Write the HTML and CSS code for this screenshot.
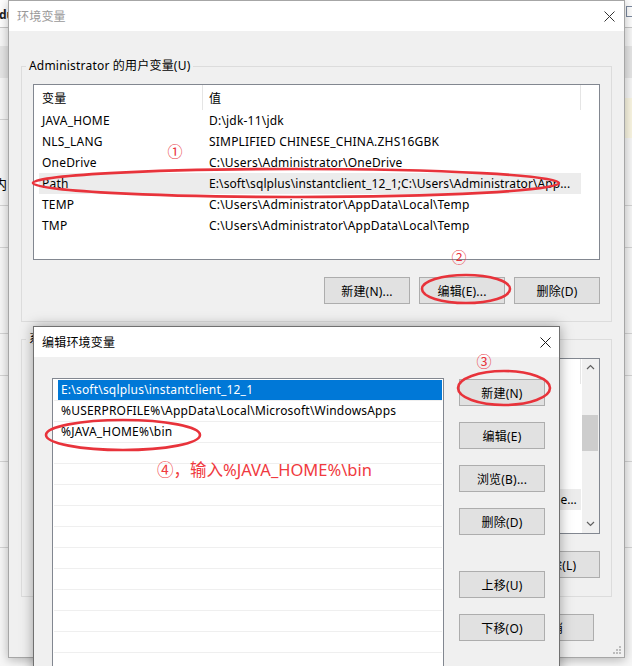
FILE: index.html
```html
<!DOCTYPE html>
<html lang="zh-CN">
<head>
  <meta charset="UTF-8" />
  <title>环境变量</title>
  <link rel="stylesheet" href="styles.css">
</head>
<body>
<div class="desktop">

  <!-- window behind the dialogs -->
  <div class="back-window">
    <div class="back-top"><span class="back-title">du</span></div>
    <div class="back-band"></div>
    <div class="back-row"></div>
    <div class="back-row tall"><span class="back-char">内</span></div>
    <div class="back-row"></div>
    <div class="back-row tall"></div>
    <div class="back-row"></div>
    <div class="back-row tall"></div>
    <div class="back-row tall"></div>
    <div class="back-icon"></div>
    <div class="back-note"></div>
  </div>

  <!-- 环境变量 -->
  <div class="window env-window">
    <div class="titlebar">
      <span class="title">环境变量</span>
      <svg class="close" width="11" height="11" viewBox="0 0 11 11"><path d="M0.5 0.5L10.5 10.5M10.5 0.5L0.5 10.5" /></svg>
    </div>
    <div class="window-body">

      <div class="group">
        <span class="group-label">Administrator 的用户变量(U)</span>
        <div class="listview">
          <div class="lv-main">
            <div class="lv-header"><span class="col-name">变量</span><span class="col-value">值</span></div>
            <div class="lv-row"><span class="col-name">JAVA_HOME</span><span class="col-value">D:\jdk-11\jdk</span></div>
            <div class="lv-row"><span class="col-name">NLS_LANG</span><span class="col-value">SIMPLIFIED CHINESE_CHINA.ZHS16GBK</span></div>
            <div class="lv-row"><span class="col-name">OneDrive</span><span class="col-value">C:\Users\Administrator\OneDrive</span></div>
            <div class="lv-row current"><span class="col-name">Path</span><span class="col-value">E:\soft\sqlplus\instantclient_12_1;C:\Users\Administrator\App...</span></div>
            <div class="lv-row"><span class="col-name">TEMP</span><span class="col-value">C:\Users\Administrator\AppData\Local\Temp</span></div>
            <div class="lv-row"><span class="col-name">TMP</span><span class="col-value">C:\Users\Administrator\AppData\Local\Temp</span></div>
          </div>
        </div>
        <div class="button-row">
          <button class="btn">新建(N)...</button>
          <button class="btn">编辑(E)...</button>
          <button class="btn">删除(D)</button>
        </div>
      </div>

      <div class="group">
        <span class="group-label">系统变量(S)</span>
        <div class="listview">
          <div class="lv-main">
            <div class="lv-header"><span class="col-name">变量</span><span class="col-value">值</span></div>
            <div class="lv-row"><span class="col-name">CLASSPATH</span><span class="col-value">.;%JAVA_HOME%\lib</span></div>
            <div class="lv-row"><span class="col-name">ComSpec</span><span class="col-value">C:\Windows\system32\cmd.exe</span></div>
            <div class="lv-row"><span class="col-name">DriverData</span><span class="col-value">C:\Windows\System32\Drivers\DriverData</span></div>
            <div class="lv-row"><span class="col-name">NUMBER_OF_PROCESSORS</span><span class="col-value">8</span></div>
            <div class="lv-row"><span class="col-name">OS</span><span class="col-value">Windows_NT</span></div>
            <div class="lv-row current"><span class="col-name">Path</span><span class="col-value">C:\Windows\system32;C:\Windows;C:\Windows\System32\Wbem;C:\Windows\System32\WindowsPowerShell\v1.0\;C:\Program Files\...</span></div>
            <div class="lv-row"><span class="col-name">PATHEXT</span><span class="col-value">.COM;.EXE;.BAT;.CMD;.VBS;.JS</span></div>
          </div>
          <div class="scrollbar">
            <svg class="arrow" width="17" height="17" viewBox="0 0 17 17"><path d="M5 10L8.5 6.5L12 10" /></svg>
            <div class="thumb"></div>
            <svg class="arrow down" width="17" height="17" viewBox="0 0 17 17"><path d="M5 7L8.5 10.5L12 7" /></svg>
          </div>
        </div>
        <div class="button-row">
          <button class="btn">新建(W)...</button>
          <button class="btn">编辑(I)...</button>
          <button class="btn">删除(L)</button>
        </div>
      </div>

      <div class="dialog-buttons">
        <button class="btn">确定</button>
        <button class="btn">取消</button>
      </div>
    </div>
    <svg class="grip" width="10" height="10" viewBox="0 0 10 10">
      <rect x="7" y="1" width="2" height="2" /><rect x="4" y="4" width="2" height="2" /><rect x="7" y="4" width="2" height="2" />
      <rect x="1" y="7" width="2" height="2" /><rect x="4" y="7" width="2" height="2" /><rect x="7" y="7" width="2" height="2" />
    </svg>
  </div>

  <!-- 编辑环境变量 -->
  <div class="window edit-window">
    <div class="titlebar">
      <span class="title">编辑环境变量</span>
      <svg class="close" width="11" height="11" viewBox="0 0 11 11"><path d="M0.5 0.5L10.5 10.5M10.5 0.5L0.5 10.5" /></svg>
    </div>
    <div class="edit-body">
      <div class="edit-list">
        <div class="edit-row selected"><span class="cell">E:\soft\sqlplus\instantclient_12_1</span></div>
        <div class="edit-row"><span class="cell">%USERPROFILE%\AppData\Local\Microsoft\WindowsApps</span></div>
        <div class="edit-row"><span class="cell">%JAVA_HOME%\bin</span></div>
        <div class="edit-row"><span class="cell"></span></div>
        <div class="edit-row"><span class="cell"></span></div>
        <div class="edit-row"><span class="cell"></span></div>
        <div class="edit-row"><span class="cell"></span></div>
        <div class="edit-row"><span class="cell"></span></div>
        <div class="edit-row"><span class="cell"></span></div>
        <div class="edit-row"><span class="cell"></span></div>
        <div class="edit-row"><span class="cell"></span></div>
        <div class="edit-row"><span class="cell"></span></div>
        <div class="edit-row"><span class="cell"></span></div>
        <div class="edit-row"><span class="cell"></span></div>
      </div>
      <div class="btn-stack">
        <button class="btn">新建(N)</button>
        <button class="btn">编辑(E)</button>
        <button class="btn">浏览(B)...</button>
        <button class="btn">删除(D)</button>
        <button class="btn move-up">上移(U)</button>
        <button class="btn">下移(O)</button>
      </div>
    </div>
  </div>

  <!-- red notes drawn over the screenshot -->
  <svg class="marks" width="632" height="666" viewBox="0 0 632 666">
    <ellipse cx="296" cy="183" rx="263" ry="14" />
    <ellipse cx="466" cy="289" rx="44" ry="14" />
    <ellipse cx="504" cy="388" rx="46" ry="17" />
    <ellipse cx="123" cy="435" rx="77" ry="15" />
    <text x="175" y="157" text-anchor="middle">①</text>
    <text x="459" y="263" text-anchor="middle">②</text>
    <text x="484" y="367" text-anchor="middle">③</text>
    <text x="157" y="476" class="note">④，输入%JAVA_HOME%\bin</text>
  </svg>

</div>
</body>
</html>
```

FILE: styles.css
```css
* {
  box-sizing: border-box;
}
body {
  margin: 0;
  font-family: "Noto Sans", "Noto Sans CJK SC", sans-serif;
  font-size: 12px;
  letter-spacing: 0.2px;
  color: #000;
  background: #f3f3f3;
}
.desktop {
  position: relative;
  width: 632px;
  height: 666px;
  overflow: hidden;
}

/* window in the background */
.back-window {
  position: absolute;
  left: 0;
  top: 0;
  width: 632px;
  height: 666px;
  background: #f7f7f7;
}
.back-top {
  height: 28px;
  background: #fff;
  border-bottom: 1px solid #c8c8c8;
}
.back-title {
  display: block;
  padding: 7px 0 0 0;
  margin-left: -1px;
  font-weight: bold;
  font-size: 12px;
  letter-spacing: 0;
  color: #222;
  line-height: 16px;
}
.back-band {
  height: 32px;
  margin-top: 18px;
  background: #e6e6e6;
}
.back-row {
  height: 42px;
  border-bottom: 1px solid #d4d4d4;
}
.back-row.tall {
  height: 86px;
}
.back-char {
  display: block;
  padding-top: 54px;
  margin-left: -6px;
  font-size: 13px;
}
.back-icon {
  position: absolute;
  right: 0;
  top: 6px;
  width: 6px;
  height: 11px;
  border: 1px solid #7c8aa0;
  border-right: none;
}
.back-note {
  position: absolute;
  right: 0;
  top: 98px;
  width: 8px;
  height: 40px;
  background: #faf6e2;
}

/* dialogs */
.window {
  position: absolute;
  display: flex;
  flex-direction: column;
  background: #f0f0f0;
}
.titlebar {
  flex: none;
  height: 30px;
  background: #fff;
  display: flex;
  align-items: center;
  justify-content: space-between;
  padding: 0 9px 0 8px;
}
.close path {
  stroke: #1a1a1a;
  stroke-width: 1;
  fill: none;
}
.env-window {
  left: 8px;
  top: 0;
  width: 617px;
  height: 658px;
  border: 1px solid #a6a6a6;
  box-shadow: 0 2px 10px rgba(0, 0, 0, 0.28);
}
.env-window .title {
  color: #999;
}
.env-window .close path {
  stroke: #333;
}
.window-body {
  padding: 35px 12px 0 12px;
}
.group {
  position: relative;
  border: 1px solid #dcdcdc;
  padding: 17px 11px 17px 11px;
}
.group + .group {
  margin-top: 17px;
  padding-top: 18px;
  padding-bottom: 18px;
}
.group-label {
  position: absolute;
  top: -9px;
  left: 4px;
  padding: 0 3px;
  line-height: 16px;
  background: #f0f0f0;
}
.listview {
  display: flex;
  height: 176px;
  border: 1px solid #828790;
  background: #fff;
  overflow: hidden;
}
.lv-main {
  flex: 1;
  min-width: 0;
}
.lv-header {
  display: flex;
  height: 25px;
  align-items: stretch;
}
.lv-header span {
  display: flex;
  align-items: center;
  border-right: 1px solid #e5e5e5;
}
.lv-header .col-name {
  width: 169px;
  padding-left: 8px;
}
.lv-header .col-value {
  width: 378px;
  padding-left: 6px;
}
.lv-row {
  display: flex;
  align-items: center;
  height: 21px;
  margin-left: 5px;
  width: 542px;
}
.lv-row.current {
  background: #ececec;
}
.lv-row .col-name {
  width: 163px;
  padding-left: 3px;
  white-space: nowrap;
  overflow: hidden;
}
.lv-row .col-value {
  width: 379px;
  padding: 0 6px 0 7px;
  white-space: nowrap;
  overflow: hidden;
  text-overflow: ellipsis;
}
.lv-row.current .col-value {
  padding-right: 0;
  letter-spacing: 0.1px;
}
.scrollbar {
  flex: none;
  width: 17px;
  display: flex;
  flex-direction: column;
  background: #f0f0f0;
}
.arrow path {
  stroke: #606060;
  stroke-width: 1.2;
  fill: none;
}
.thumb {
  height: 36px;
  margin-top: 39px;
  margin-right: 1px;
  background: #cdcdcd;
}
.arrow.down {
  margin-top: auto;
  margin-bottom: 1px;
}
.button-row {
  display: flex;
  justify-content: flex-end;
  gap: 9px;
  margin-top: 17px;
}
.btn {
  width: 86px;
  height: 27px;
  padding: 0;
  border: 1px solid #adadad;
  background: #e1e1e1;
  font-family: inherit;
  font-size: 12px;
  letter-spacing: inherit;
  color: #000;
}
.dialog-buttons {
  display: flex;
  justify-content: flex-end;
  gap: 10px;
  margin-top: 17px;
  padding-right: 18px;
}
.grip {
  position: absolute;
  right: 2px;
  bottom: 2px;
}
.grip rect {
  fill: #bcbcbc;
}

/* edit dialog */
.edit-window {
  left: 33px;
  top: 326px;
  width: 527px;
  height: 400px;
  border: 1px solid #707070;
  box-shadow: 0 0 12px rgba(0, 0, 0, 0.35);
}
.edit-window .titlebar {
  padding-right: 8px;
}
.edit-body {
  display: flex;
  align-items: flex-start;
  padding: 21px 14px 0 18px;
}
.edit-list {
  width: 392px;
  height: 360px;
  padding-top: 1px;
  border: 1px solid #828790;
  background: #fff;
  overflow: hidden;
}
.edit-row {
  height: 21px;
  margin: 0 1px;
  padding-left: 4px;
  border-bottom: 1px solid #efefef;
}
.edit-row .cell {
  display: block;
  height: 20px;
  line-height: 20px;
  padding-left: 3px;
  white-space: nowrap;
  overflow: hidden;
}
.edit-row.selected .cell {
  background: #0078d7;
  color: #fff;
}
.btn-stack {
  display: flex;
  flex-direction: column;
  gap: 16px;
  margin-left: 15px;
  padding-top: 1px;
}
.btn-stack .move-up {
  margin-top: 20px;
}

/* annotations */
.marks {
  position: absolute;
  left: 0;
  top: 0;
  pointer-events: none;
}
.marks ellipse {
  fill: none;
  stroke: #e8333b;
  stroke-width: 2.6;
}
.marks text {
  font-family: "Noto Sans CJK SC", sans-serif;
  font-size: 15px;
  letter-spacing: 0;
  fill: #e8333b;
}
.marks .note {
  font-family: "Noto Sans", "Noto Sans CJK SC", sans-serif;
  font-size: 16.5px;
  fill: #f03a40;
}
```
